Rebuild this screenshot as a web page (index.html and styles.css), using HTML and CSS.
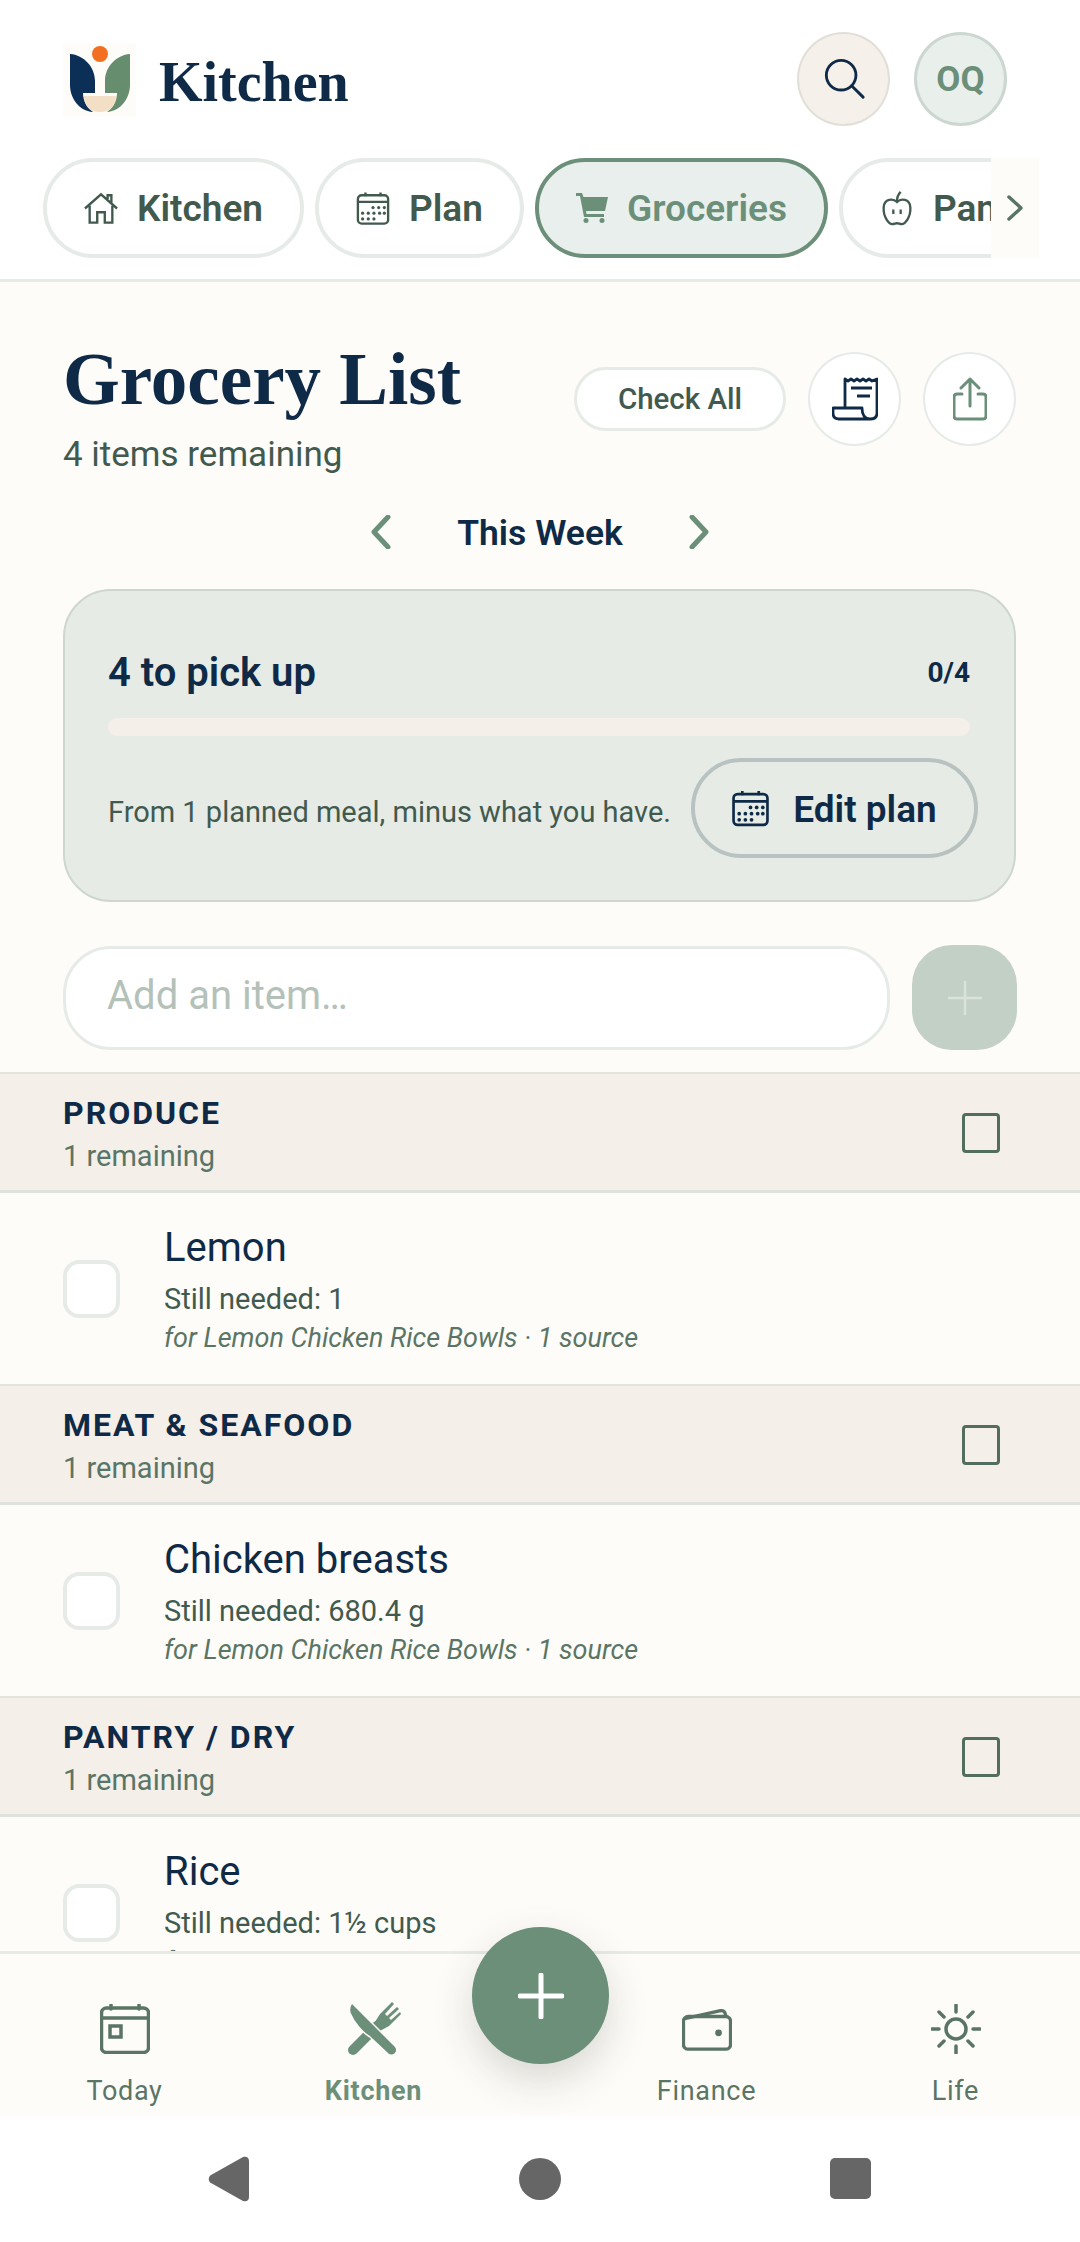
FILE: index.html
```html
<!DOCTYPE html>
<html lang="en">
<head>
<meta charset="utf-8">
<title>Grocery List</title>
<link rel="stylesheet" href="styles.css">
</head>
<body>
<div class="app">
  <header class="topbar">
    <div class="brand-row">
      <svg class="logo" viewBox="0 0 73 74"><rect width="73" height="74" fill="#fefcf8"/><circle cx="37" cy="11" r="8" fill="#f26f21"/><path d="M7 11C21 12 32 24 32 38V50H20C20 58 24 65 30 69C16 68 7 55 7 42Z" fill="#0b2f57"/><path d="M67 11C53 12 42 24 42 38V50H54C54 58 50 65 44 69C58 68 67 55 67 42Z" fill="#668e6e"/><path d="M21 53H53C53 62 48 69 37 69C26 69 21 62 21 53Z" fill="#f2dfc6"/></svg>
      <div class="brand">Kitchen</div>
      <div class="top-actions">
        <div class="round search"><svg class="ic-search" viewBox="0 0 44 44"><circle cx="19" cy="18" r="15.5"/><path d="M30 29L42 41"/></svg></div>
        <div class="round avatar">OQ</div>
      </div>
    </div>
    <nav class="tabs">
      <div class="tab"><svg class="tab-ic" viewBox="0 0 36 34"><path d="M1 17L18 2L35 17M6 14V32H14V21H22V32H30V14M25 7V3H29V11"/></svg><span>Kitchen</span></div>
      <div class="tab"><svg class="tab-ic" viewBox="0 0 36 36"><rect x="2" y="4" width="32" height="30" rx="4"/><path d="M2 11H34M10 1V5M26 1V5"/><g class="dots"><circle cx="18" cy="17" r="1.7"/><circle cx="24" cy="17" r="1.7"/><circle cx="30" cy="17" r="1.7"/><circle cx="7" cy="23" r="1.7"/><circle cx="13" cy="23" r="1.7"/><circle cx="19" cy="23" r="1.7"/><circle cx="25" cy="23" r="1.7"/><circle cx="30" cy="23" r="1.7"/><circle cx="7" cy="29" r="1.7"/><circle cx="13" cy="29" r="1.7"/><circle cx="19" cy="29" r="1.7"/></g></svg><span>Plan</span></div>
      <div class="tab active"><svg class="tab-cart" viewBox="0 0 32 30"><path d="M0 0H6L7.500 4H32L29 18H10L10.500 21H28V24H8L4 3H0Z"/><circle cx="10" cy="27.500" r="2.500"/><circle cx="26" cy="27.500" r="2.500"/></svg><span>Groceries</span></div>
      <div class="tab"><svg class="tab-ic" viewBox="0 0 32 38"><path d="M16 12C12 8 2 8 1.500 18C1 28 7 36 11 36C13 36 14 35 16 35C18 35 19 36 21 36C25 36 31 28 30.500 18C30 8 20 8 16 12Z"/><path d="M16 11C16 7 17 4 20 1"/><path class="eyes" d="M12 20V25M20 20V25"/></svg><span>Pantry</span></div>
    </nav>
    <div class="tabs-more"><svg class="ic-more" viewBox="0 0 16 26"><path d="M2 2L14 13L2 24"/></svg></div>
  </header>

  <main class="content">
    <section class="head">
      <div>
        <h1 class="title">Grocery List</h1>
        <p class="subtitle">4 items remaining</p>
      </div>
      <div class="head-actions">
        <div class="check-all">Check All</div>
        <div class="round plain"><svg class="ic-receipt" viewBox="0 0 46 44"><path d="M13 31V2L16 4L19 2L22 4L25 2L28 4L31 2L34 4L37 2L40 4L45 2V36C45 40 43 42 38 42H7C3 42 1 40 1 36V31H30C30 38 33 42 38 42"/><path d="M19 11H40M25 19H38"/></svg></div>
        <div class="round plain"><svg class="ic-share" viewBox="0 0 34 44"><path d="M9 17H4C2 17 1 18 1 20V39C1 41 2 42 4 42H30C32 42 33 41 33 39V20C33 18 32 17 30 17H25M17 29V2M8 11L17 2L26 11"/></svg></div>
      </div>
    </section>

    <div class="week">
      <svg class="ic-week" viewBox="0 0 20 34"><path d="M17 2L3 17L17 32"/></svg>
      <span class="week-label">This Week</span>
      <svg class="ic-week" viewBox="0 0 20 34"><path d="M3 2L17 17L3 32"/></svg>
    </div>

    <section class="card">
      <div class="card-row">
        <span class="card-title">4 to pick up</span>
        <span class="card-count">0/4</span>
      </div>
      <div class="bar"></div>
      <div class="card-foot">
        <span class="card-note">From 1 planned meal, minus what you have.</span>
        <div class="edit-plan"><svg class="ic-edit" viewBox="0 0 36 36"><rect x="1.500" y="4" width="33" height="30" rx="4"/><path d="M1.500 11H34.500M10 1V5M26 1V5"/><g class="dots"><circle cx="18" cy="17" r="1.800"/><circle cx="24" cy="17" r="1.800"/><circle cx="30" cy="17" r="1.800"/><circle cx="7" cy="23" r="1.800"/><circle cx="13" cy="23" r="1.800"/><circle cx="19" cy="23" r="1.800"/><circle cx="25" cy="23" r="1.800"/><circle cx="30" cy="23" r="1.800"/><circle cx="7" cy="29" r="1.800"/><circle cx="13" cy="29" r="1.800"/><circle cx="19" cy="29" r="1.800"/></g></svg><span>Edit plan</span></div>
      </div>
    </section>

    <div class="add-row">
      <input class="add-input" type="text" placeholder="Add an item…">
      <div class="add-btn"><svg class="ic-add" viewBox="0 0 34 34"><path d="M17 0V34M0 17H34"/></svg></div>
    </div>

    <div class="cat"><div><div class="cat-name">PRODUCE</div><div class="cat-sub">1 remaining</div></div><div class="cat-box"></div></div>
    <div class="item"><div class="item-box"></div><div><div class="item-name">Lemon</div><div class="item-need">Still needed: 1</div><div class="item-src">for Lemon Chicken Rice Bowls · 1 source</div></div></div>

    <div class="cat"><div><div class="cat-name">MEAT &amp; SEAFOOD</div><div class="cat-sub">1 remaining</div></div><div class="cat-box"></div></div>
    <div class="item"><div class="item-box"></div><div><div class="item-name">Chicken breasts</div><div class="item-need">Still needed: 680.4 g</div><div class="item-src">for Lemon Chicken Rice Bowls · 1 source</div></div></div>

    <div class="cat"><div><div class="cat-name">PANTRY / DRY</div><div class="cat-sub">1 remaining</div></div><div class="cat-box"></div></div>
    <div class="item"><div class="item-box"></div><div><div class="item-name">Rice</div><div class="item-need">Still needed: 1½ cups</div><div class="item-src">for Lemon Chicken Rice Bowls · 1 source</div></div></div>
  </main>

  <nav class="bottom">
    <div class="nav-item"><svg class="nav-ic" viewBox="0 0 50 50"><rect x="1.500" y="4" width="47" height="44.500" rx="5"/><path d="M1.500 14H48.500M11 1V5M39 1V5"/><rect x="10" y="22" width="11" height="11"/></svg><span>Today</span></div>
    <div class="nav-item on"><svg class="nav-fork" viewBox="0 0 54 56"><path class="fk-h" d="M6 49L30 25"/><path class="fk-head" d="M26 24L33 13L45 1L47 3L38 13L40 15L50 6L52 8L42 17L44 19L53 11L54 13L42 25L31 31Z"/><path class="fk-k" d="M5 2L48 45A5 5 0 0 1 41 53L23 36C16 32 7 22 3 12C2 8 3 4 5 2Z"/></svg><span>Kitchen</span></div>
    <div class="nav-gap"></div>
    <div class="nav-item"><svg class="nav-ic" viewBox="0 0 52 46"><path d="M4 12L40 4C43 3.500 45 5 45.500 9"/><rect x="1.500" y="10" width="49" height="34" rx="5"/><circle class="fill" cx="38" cy="27" r="3.500"/></svg><span>Finance</span></div>
    <div class="nav-item"><svg class="nav-ic" viewBox="0 0 50 50"><circle cx="25" cy="25" r="10"/><path d="M25 1V8M25 42V49M1 25H8M42 25H49M8 8L13 13M37 37L42 42M42 8L37 13M13 37L8 42"/></svg><span>Life</span></div>
  </nav>
  <div class="fab"><svg class="ic-fab" viewBox="0 0 46 46"><path d="M23 2V44M2 23H44"/></svg></div>

  <div class="sysbar">
    <svg class="sys" viewBox="0 0 42 46"><path d="M3 19L35 1C38 0 41 1 41 5V41C41 45 38 46 35 45L3 27C0 25 0 21 3 19Z"/></svg>
    <svg class="sys" viewBox="0 0 44 46"><circle cx="22" cy="23" r="22"/></svg>
    <svg class="sys" viewBox="0 0 42 42"><rect width="41" height="41" rx="5"/></svg>
  </div>
</div>
</body>
</html>
```

FILE: styles.css
```css
* { box-sizing: border-box; }
html, body { margin: 0; padding: 0; background: #fff; }
body { font-family: Roboto, "Noto Sans", sans-serif; color: #0f2a47; }
svg { display: block; flex: none; }

.app { position: relative; width: 1080px; height: 2242px; display: flex; flex-direction: column; overflow: hidden; background: #fff; }

/* header */
.topbar { position: relative; background: #fff; padding-top: 32px; border-bottom: 3px solid #e6ebe8; flex: none; height: 282px; }
.brand-row { display: flex; align-items: center; padding: 0 73px 0 63px; height: 94px; }
.logo { width: 73px; height: 74px; margin-top: 2px; }
.brand { font-family: "Liberation Serif", serif; font-weight: 700; font-size: 56px; line-height: 64px; margin-left: 23px; color: #0f2a47; margin-top: 6px; }
.top-actions { margin-left: auto; display: flex; gap: 24px; }
.round { width: 93px; height: 94px; border-radius: 50%; display: flex; align-items: center; justify-content: center; flex: none; }
.search { background: #f5f0ea; border: 2px solid #e2dfd8; }
.ic-search { width: 42px; height: 42px; fill: none; stroke: #0f2a47; stroke-width: 3; stroke-linecap: round; }
.avatar { background: #e9efeb; border: 3px solid #ccd7d1; color: #6b8f78; font-weight: 700; font-size: 35px; }

.tabs { display: flex; gap: 11px; margin-top: 32px; padding-left: 43px; width: 991px; overflow: hidden; }
.tab { flex: none; display: flex; align-items: center; gap: 19px; height: 100px; padding: 0 37px; border: 4px solid #e6ebe8; border-radius: 50px; background: #fff; color: #425a4e; font-size: 37px; font-weight: 600; }
.tab.active { background: #e9efec; border-color: #6b8f78; color: #6b8f78; }
.tab-ic { width: 34px; height: 35px; fill: none; stroke: #425a4e; stroke-width: 2.500; }
.dots { fill: #425a4e; stroke: none; }
.tab-cart { width: 32px; height: 30px; fill: #6b8f78; }
.tabs-more { position: absolute; left: 991px; top: 158px; width: 48px; height: 100px; background: #fefcf8; display: flex; align-items: center; justify-content: center; }
.ic-more { width: 16px; height: 26px; fill: none; stroke: #5a7565; stroke-width: 3.500; stroke-linecap: round; stroke-linejoin: round; }

/* content */
.content { flex: 1; min-height: 0; overflow: hidden; background: #fefcf8; }
.head { display: flex; justify-content: space-between; padding: 58px 64px 0 63px; }
.title { margin: 0; font-family: "Liberation Serif", serif; font-weight: 700; font-size: 73px; line-height: 80px; color: #0f2a47; }
.subtitle { margin: 15px 0 0; font-size: 35px; line-height: 40px; color: #425a4e; }
.head-actions { display: flex; align-items: center; gap: 22px; height: 94px; margin-top: 12px; }
.check-all { width: 212px; height: 64px; border: 3px solid #e6ebe8; border-radius: 32px; background: #fff; color: #425a4e; font-size: 29.500px; font-weight: 500; display: flex; align-items: center; justify-content: center; }
.plain { background: #fff; border: 2px solid #e6ebe8; }
.ic-receipt { width: 46px; height: 44px; fill: none; stroke: #0f2a47; stroke-width: 2.800; stroke-linejoin: round; }
.ic-share { width: 34px; height: 44px; fill: none; stroke: #6b8f78; stroke-width: 3; stroke-linecap: round; stroke-linejoin: round; }

.week { display: flex; align-items: center; justify-content: center; gap: 66px; height: 60px; margin-top: 27px; }
.week-label { font-size: 35.500px; font-weight: 600; line-height: 40px; color: #0f2a47; margin-top: 2px; }
.ic-week { width: 20px; height: 34px; fill: none; stroke: #6b8f78; stroke-width: 5; stroke-linecap: round; stroke-linejoin: round; }

.card { margin: 27px 64px 0 63px; height: 313px; padding: 56px 44px 0 43px; background: #e6ebe5; border: 2px solid #cdd6d0; border-radius: 48px; }
.card-row { display: flex; align-items: center; justify-content: space-between; height: 50px; }
.card-title { font-size: 40px; font-weight: 600; color: #0f2a47; }
.card-count { font-size: 28px; font-weight: 700; color: #0f2a47; }
.bar { height: 18px; margin-top: 21px; background: #f4efe9; border-radius: 9px; }
.card-foot { display: flex; align-items: center; justify-content: space-between; margin: 22px -8px 0 0; }
.card-note { font-size: 29px; color: #425a4e; white-space: nowrap; margin-top: 7px; }
.edit-plan { flex: none; width: 287px; height: 100px; display: flex; align-items: center; justify-content: center; gap: 24px; border: 4px solid #b8c2c0; border-radius: 50px; color: #0f2a47; font-size: 37px; font-weight: 600; }
.edit-plan span { margin-top: 2px; }
.ic-edit { width: 37px; height: 37px; fill: none; stroke: #0f2a47; stroke-width: 2.600; }
.ic-edit .dots { fill: #0f2a47; }

.add-row { display: flex; gap: 22px; margin: 43px 63px 22px; align-items: center; }
.add-input { width: 827px; height: 104px; border: 3px solid #e6ebe8; border-radius: 48px; background: #fff; padding: 0 41px 5px; font: 400 40px Roboto, sans-serif; color: #0f2a47; outline: none; }
.add-input::placeholder { color: #b4c1b9; opacity: 1; }
.add-btn { width: 105px; height: 105px; border-radius: 40px; background: #c3d0c6; display: flex; align-items: center; justify-content: center; }
.ic-add { width: 34px; height: 34px; fill: none; stroke: #d9e2db; stroke-width: 2.500; }

.cat { display: flex; align-items: center; justify-content: space-between; height: 121px; padding: 19px 55px 14px 63px; background: #f4efe9; border-top: 2px solid #e4e4de; border-bottom: 3px solid #dfe2dc; }
.cat-name { font-size: 32px; line-height: 40px; font-weight: 700; letter-spacing: 2px; color: #0f2a47; }
.cat-sub { font-size: 29px; line-height: 40px; margin-top: 3px; color: #5a7565; }
.cat-box { width: 38px; height: 40px; margin: 0 25px 3px 0; border: 3px solid #526c5d; border-radius: 4px; }
.item { display: flex; align-items: center; gap: 44px; height: 191px; padding: 2px 0 0 63px; background: #fefcf8; }
.item-box { width: 57px; height: 58px; margin-top: -2px; flex: none; border: 4px solid #e6ebe8; border-radius: 16px; background: #fff; }
.item-name { font-size: 40px; line-height: 50px; color: #0f2a47; }
.item-need { font-size: 29px; line-height: 38px; margin-top: 7px; color: #425a4e; }
.item-src { font-size: 27px; line-height: 36px; margin-top: 2px; font-style: italic; color: #5a7565; }

/* bottom nav */
.bottom { flex: none; display: flex; height: 165px; background: #fefcf8; border-top: 3px solid #e6ebe5; padding-top: 47px; }
.nav-item { flex: 1; display: flex; flex-direction: column; align-items: center; color: #5a7565; font-size: 27px; letter-spacing: .7px; }
.nav-item span { line-height: 36px; margin-top: 16px; }
.nav-item.on { color: #6b8f78; font-weight: 700; }
.nav-gap { flex: none; width: 84px; }
.nav-ic { width: 50px; height: 56px; padding: 3px 0; fill: none; stroke: #5a7565; stroke-width: 3.500; stroke-linecap: round; }
.nav-ic .fill { fill: #5a7565; stroke: none; }
.nav-fork { width: 54px; height: 56px; }
.fk-h { fill: none; stroke: #6b8f78; stroke-width: 10; stroke-linecap: round; }
.fk-head { fill: #6b8f78; }
.fk-k { fill: #6b8f78; stroke: #fefcf8; stroke-width: 1.500; }
.fab { position: absolute; left: 472px; top: 1927px; width: 137px; height: 137px; border-radius: 50%; background: #6b8f78; box-shadow: 0 16px 40px rgba(40, 50, 45, .18); display: flex; align-items: center; justify-content: center; }
.ic-fab { width: 46px; height: 46px; fill: none; stroke: #fff; stroke-width: 5; stroke-linecap: round; }

.sysbar { flex: none; height: 126px; display: flex; align-items: center; justify-content: center; gap: 269px; background: #fff; }
.sys { width: 42px; height: 46px; fill: #666; }
```
